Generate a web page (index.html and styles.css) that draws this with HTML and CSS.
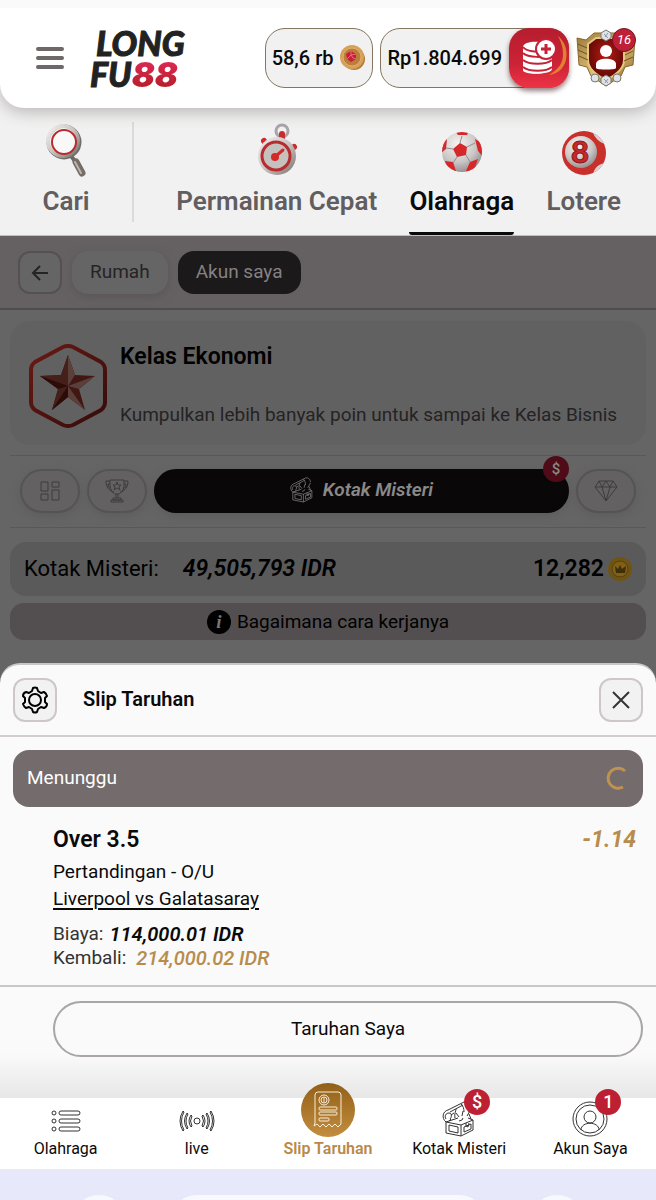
FILE: index.html
```html
<!DOCTYPE html>
<html lang="id">
<head>
    <meta charset="UTF-8">
    <meta name="viewport" content="width=device-width, initial-scale=1.0">
    <title>LONG FU88 - Slip Taruhan</title>
    <link rel="stylesheet" href="styles.css">
</head>
<body>
    <!-- Shared gradients and the treasure chest icon -->
    <svg class="defs" aria-hidden="true">
        <defs>
            <linearGradient id="silver" x1="0" y1="0" x2="1" y2="1">
                <stop offset="0" stop-color="#f4f0ef"/><stop offset="0.5" stop-color="#c9c4c2"/><stop offset="1" stop-color="#77706d"/>
            </linearGradient>
            <linearGradient id="gold" x1="0" y1="0" x2="1" y2="1">
                <stop offset="0" stop-color="#9a7838"/><stop offset="0.5" stop-color="#dbbd78"/><stop offset="1" stop-color="#8d6525"/>
            </linearGradient>
            <radialGradient id="shield" cx="0.5" cy="0.4" r="0.6">
                <stop offset="0" stop-color="#b51d12"/><stop offset="1" stop-color="#5a0504"/>
            </radialGradient>
            <linearGradient id="hex" x1="0" y1="0" x2="1" y2="1">
                <stop offset="0" stop-color="#6a1a14"/><stop offset="1" stop-color="#340c0a"/>
            </linearGradient>
            <radialGradient id="ball" cx="0.4" cy="0.3" r="0.75">
                <stop offset="0" stop-color="#f6f4f3"/><stop offset="0.6" stop-color="#cbc7c6"/><stop offset="1" stop-color="#8f8a89"/>
            </radialGradient>
            <clipPath id="ballClip"><circle cx="21" cy="21" r="20"/></clipPath>
            <clipPath id="lottoClip"><circle cx="23" cy="23" r="22"/></clipPath>
        </defs>
        <symbol id="chest" viewBox="0 0 34 36">
            <g fill="none" stroke="currentColor" stroke-width="1" stroke-linejoin="round">
                <path d="M4 21l15 3v11L4 32zM19 24l12-5v10l-12 6M4 21l12-4M26 17l5 2"/>
                <path d="M7 24l9 2v6l-9-2zM22 26l7-3v5l-7 3zM24 22v3l2 1 1-4"/>
                <path d="M4 21c-5-4-3-11 2-12L22 1c4-1 7 2 7 6"/>
                <path d="M4 18c-2-3 0-6 3-6s3 4 1 6M8 11l13-7M13 17c-1-4 1-7 1-9M22 11c0-4-1-6-3-8"/>
                <path d="M7 20l2-2M14 12l3 4M21 10l-1 5M29 8l-4 7M27 13l2 5M17 20l3-1 1-2M9 14l3-2"/>
            </g>
        </symbol>
    </svg>

    <header class="header">
        <button class="menu-button" aria-label="Menu"><span></span><span></span><span></span></button>
        <a class="logo" href="#"><span>LONG</span><span>FU<b>88</b></span></a>
        <div class="account">
            <button class="pill points">58,6 rb
                <svg width="26" height="26" viewBox="0 0 26 26">
                    <circle cx="14" cy="14" r="11" fill="#b57835"/>
                    <circle cx="12" cy="12" r="12" fill="#d5a057"/>
                    <circle cx="12" cy="12" r="9" fill="#ba7d3c" stroke="#e1b16c"/>
                    <path d="M11 6l5 3v5l-5 3-4-3-1-5z" fill="#c8203a"/><path d="M11 6v4l5-1M11 10l2 3 3 1M11 10l-4 4" stroke="#eb6b7b" stroke-width="1" fill="none"/>
                </svg>
            </button>
            <button class="pill balance">Rp1.804.699
                <span class="deposit">
                    <svg width="60" height="60" viewBox="0 0 60 60">
                        <path d="M49 8c7 6 10 14 8 24-2 8-8 14-17 15 10-6 14-12 14-21 0-7-2-12-5-18z" fill="#ec9d32" opacity="0.75"/>
                        <path d="M14 19c0-7 25-7 25 0v23c0 5-25 5-25 0z" fill="#fff"/>
                        <path d="M14 27c9 5 29 3 29 0v14c0 6-29 6-29 0z" fill="#fff"/>
                        <path d="M14 19c4 5 14 5 20 4M14 25c5 5 22 5 29 1M14 32c6 5 23 5 29 0M14 39c6 5 23 5 29 0" fill="none" stroke="#c42236" stroke-width="2"/>
                        <circle cx="37" cy="21" r="10" fill="#fff" stroke="#c42236" stroke-width="2"/>
                        <path d="M37 16v10M32 21h10" stroke="#c42236" stroke-width="3"/>
                    </svg>
                </span>
            </button>
            <button class="profile" aria-label="Profil">
                <svg width="60" height="60" viewBox="0 0 60 60">
                    <path d="M1 10l9 2 8-7h24l8 7 9-2-2 27-8 2-4 9-15 10-15-10-4-9-8-2z" fill="url(#gold)" stroke="#8c6427"/>
                    <path d="M12 16l8-6h20l8 6v16c0 9-8 15-18 20-10-5-18-11-18-20z" fill="url(#shield)" stroke="#e6c77e" stroke-width="2"/>
                    <path d="M2 16l9 4M2 22l9 4M3 28l9 4M49 20l9-4M49 27l8-4M48 33l9-4" stroke="#73511c" stroke-width="1"/>
                    <circle cx="30" cy="23" r="6" fill="#fff"/><path d="M20 40v-4c0-7 20-7 20 0v4c0 2-20 2-20 0z" fill="#fff"/>
                    <g fill="#dce2e8" stroke="#7e776a"><path d="M30 2l5 3v5l-5 3-5-3V5zM30 47l5 3v5l-5 3-5-3v-5z"/><circle cx="19" cy="50" r="4"/><circle cx="41" cy="50" r="4"/></g>
                    <path d="M28 6l4 4M32 5l-3 4M28 51l4 4M32 51l-3 4" stroke="#8997a6"/>
                </svg>
                <span class="profile-level">16</span>
            </button>
        </div>
    </header>

    <nav class="categories">
        <a class="category search" href="#">
            <svg width="44" height="56" viewBox="0 0 44 56">
                <path d="M27 34l4 5" stroke="#6e6764" stroke-width="4"/>
                <path d="M32 40l6 11" stroke="#746d68" stroke-width="7" stroke-linecap="round"/><path d="M31 40l6 11" stroke="#bcb5ae" stroke-width="2" stroke-linecap="round"/>
                <circle cx="20" cy="20" r="16" fill="#f1f1f1" stroke="#716d69" stroke-width="3"/>
                <circle cx="19" cy="19" r="15" fill="none" stroke="url(#silver)" stroke-width="4"/>
                <circle cx="20" cy="20" r="12" fill="#f8f8f8" stroke="#b82b30" stroke-width="2"/>
            </svg>
            Cari
        </a>
        <a class="category" href="#">
            <svg width="44" height="56" viewBox="0 0 44 56">
                <circle cx="27" cy="9" r="6" fill="none" stroke="#aaa3aa" stroke-width="3"/>
                <path d="M27 12v5M9 19l3 4M39 25l-3 2" stroke="#c92c2a" stroke-width="6" stroke-linecap="round"/>
                <circle cx="22" cy="34" r="19" fill="url(#silver)"/>
                <circle cx="21" cy="34" r="14" fill="#c5c1bf" stroke="#b82b2e" stroke-width="3"/>
                <path d="M21 34l7-6" stroke="#d42a28" stroke-width="3" stroke-linecap="round"/><circle cx="20" cy="35" r="4" fill="#d42a28"/>
            </svg>
            Permainan Cepat
        </a>
        <a class="category active" href="#">
            <svg width="42" height="56" viewBox="0 -9 42 56">
                <circle cx="21" cy="21" r="20" fill="url(#ball)"/>
                <g clip-path="url(#ballClip)">
                    <path d="M19 12l7 4-1 8-9 2-4-8zM14 0h14l-2 4h-9zM34 8l8 5v13l-5-6zM0 12l6-4-1 10-5 4zM4 30l8 1 3 9-8 3zM29 31l8-3-5 14-7-2z" fill="#d6282a"/>
                    <path d="M19 12l2-7M26 16l8-4M25 24l4 7M16 26l-4 6M12 18l-7-1" stroke="#928d8c" stroke-width="1"/>
                </g>
            </svg>
            Olahraga
        </a>
        <a class="category" href="#">
            <svg width="46" height="56" viewBox="0 -8 46 56">
                <circle cx="23" cy="23" r="22" fill="#c9302b"/>
                <g clip-path="url(#lottoClip)">
                    <circle cx="20" cy="22" r="16" fill="url(#ball)"/>
                    <path d="M31 0l15 14c-6 0-13-6-15-14zM46 33c-7 0-13 4-14 12l14-4z" fill="#d8d3d2"/>
                </g>
                <text x="19" y="33" class="ball-number">8</text>
            </svg>
            Lotere
        </a>
    </nav>

    <main class="content">
        <nav class="breadcrumbs">
            <button class="back" aria-label="Kembali"><svg width="18" height="18" viewBox="0 0 18 18"><path d="M9 2L2 9l7 7M2 9h15" fill="none" stroke="currentColor" stroke-width="2"/></svg></button>
            <a class="crumb" href="#">Rumah</a>
            <a class="crumb current" href="#">Akun saya</a>
        </nav>

        <section class="level-card">
            <svg width="78" height="84" viewBox="0 0 78 84">
                <path d="M34 3q5-2 10 0l28 15q4 3 4 8v32q0 5-4 8L44 81q-5 2-10 0L6 66q-4-3-4-8V26q0-5 4-8z" fill="none" stroke="url(#hex)" stroke-width="4"/>
                <path d="M39 11l7 20 20 1-16 13 6 21-17-13-16 13 6-21L11 32l21-1z" fill="#401713"/>
                <path d="M39 11v31l7-11zM66 32L39 42l11 3zM56 66L39 42v11z" fill="#5b3f3b"/>
                <path d="M39 11v31l-7-11zM11 32l28 10-7-11zM23 66l16-24-10 3z" fill="#45201b"/>
                <path d="M11 32l28 10-10 3zM39 42v11L23 66z" fill="#2d0c08"/>
            </svg>
            <div class="level-text">
                <h2>Kelas Ekonomi</h2>
                <p>Kumpulkan lebih banyak poin untuk sampai ke Kelas Bisnis</p>
            </div>
        </section>

        <div class="tabs">
            <button class="tab" aria-label="Ringkasan"><svg width="20" height="20" viewBox="0 0 20 20"><path d="M1 1h7v9H1zM1 13h7v6H1zM12 1h7v5h-7zM12 9h7v10h-7z" fill="none" stroke="currentColor"/></svg></button>
            <button class="tab" aria-label="Turnamen"><svg width="24" height="24" viewBox="0 0 24 24"><g fill="none" stroke="currentColor"><path d="M5 1h14v5c0 5-3 8-5 9h-4c-2-1-5-4-5-9zM5 2H1c0 6 3 10 8 11M19 2h4c0 6-3 10-8 11M5 5H3c0 3 1 4 3 5M19 5h2c0 3-1 4-3 5M11 15v4M13 15v4M8 19h8v2H8zM6 21h12v2H6z"/><path d="M12 3l1 3h3l-2 2 1 3-3-2-3 2 1-3-2-2h3z"/></g></svg></button>
            <button class="tab selected"><svg width="24" height="26"><use href="#chest"/></svg>Kotak Misteri<span class="badge">$</span></button>
            <button class="tab" aria-label="Berlian"><svg width="24" height="22" viewBox="0 0 24 22"><path d="M5 1h14l4 6-11 14L1 7zM1 7h22M5 1l3 6 4 14 4-14 3-6M8 7l4-6 4 6" fill="none" stroke="currentColor"/></svg></button>
        </div>

        <div class="box-total">
            <span>Kotak Misteri:</span>
            <strong class="amount">49,505,793 IDR</strong>
            <strong class="coins">12,282
                <svg width="24" height="24" viewBox="0 0 24 24"><circle cx="12" cy="12" r="12" fill="#705512"/><circle cx="12" cy="12" r="8" fill="#805f17" stroke="#554012"/><path d="M7 9l3 3 2-4 2 4 4-3-1 7H8z" fill="#3f2e0b"/></svg>
            </strong>
        </div>
        <button class="how"><span class="info">i</span>Bagaimana cara kerjanya</button>
    </main>

    <section class="slip">
        <header class="slip-header">
            <button class="square" aria-label="Pengaturan">
                <svg width="28" height="28" viewBox="0 0 28 28"><g fill="none" stroke="#000" stroke-width="2" stroke-linejoin="round"><path d="M11 5l1-3q2-1 4 0l1 3 3 2 3-1q2 1 3 4l-2 2v4l2 2q0 3-3 4l-3-1-3 2-1 3q-2 1-4 0l-1-3-3-2-3 1q-2-1-3-4l2-2v-4l-2-2q0-3 3-4l3 1z"/><circle cx="14" cy="14" r="6"/></g></svg>
            </button>
            <h2>Slip Taruhan</h2>
            <button class="square" aria-label="Tutup"><svg width="18" height="18" viewBox="0 0 18 18"><path d="M1 1l16 16M17 1L1 17" stroke="#333" stroke-width="2"/></svg></button>
        </header>
        <div class="slip-body">
            <div class="pending">Menunggu
                <svg width="24" height="24" viewBox="0 0 24 24"><path d="M20 5A10 10 0 1 0 18 21" fill="none" stroke="#c19150" stroke-width="3"/></svg>
            </div>
            <article class="bet">
                <div class="bet-title"><h3>Over 3.5</h3><span class="odds">-1.14</span></div>
                <p>Pertandingan - O/U</p>
                <p><a href="#">Liverpool vs Galatasaray</a></p>
                <dl>
                    <div><dt>Biaya:</dt><dd>114,000.01 IDR</dd></div>
                    <div class="returns"><dt>Kembali:</dt><dd>214,000.02 IDR</dd></div>
                </dl>
            </article>
        </div>
        <div class="slip-footer"><button class="my-bets">Taruhan Saya</button></div>
    </section>

    <nav class="bottom-nav">
        <a href="#"><svg width="30" height="24" viewBox="0 0 30 24"><g fill="none" stroke="#333"><circle cx="3" cy="4" r="2"/><circle cx="3" cy="12" r="2"/><circle cx="3" cy="20" r="2"/><rect x="8" y="2" width="21" height="4" rx="2"/><rect x="8" y="10" width="21" height="4" rx="2"/><rect x="8" y="18" width="21" height="4" rx="2"/></g></svg>Olahraga</a>
        <a href="#"><svg width="36" height="24" viewBox="0 0 36 24"><g fill="none" stroke="#333"><circle cx="18" cy="12" r="3"/><g id="waves"><path d="M13 7q-3 5 0 10l-1 1q-4-6 0-12zM9 5q-4 7 0 14l-1 1q-5-8 0-16zM5 3q-5 9 0 18l-1 1q-6-10 0-20z"/></g><use href="#waves" transform="matrix(-1 0 0 1 36 0)"/></g></svg>live</a>
        <a class="selected" href="#">
            <span class="slip-icon"><svg width="30" height="38" viewBox="0 0 30 38"><g fill="none" stroke="#f8eedc"><path d="M2 32V4q0-3 3-3h20q3 0 3 3v29l-3 3-3-3-3 3-3-3-3 3-3-3-3 3-3-3-3 2z"/><circle cx="11" cy="9" r="5"/><circle cx="11" cy="9" r="3"/><path d="M11 7v4"/><rect x="6" y="16" width="18" height="3" rx="1"/><rect x="6" y="21" width="18" height="3" rx="1"/><rect x="6" y="27" width="10" height="3" rx="1"/></g></svg></span>
            Slip Taruhan
        </a>
        <a href="#"><svg width="34" height="36"><use href="#chest"/></svg><span class="badge">$</span>Kotak Misteri</a>
        <a href="#"><svg width="36" height="36" viewBox="0 0 36 36"><g fill="none" stroke="#333"><circle cx="18" cy="18" r="17"/><circle cx="18" cy="18" r="14"/><circle cx="18" cy="16" r="6"/><path d="M9 29c0-9 18-9 18 0"/></g></svg><span class="badge">1</span>Akun Saya</a>
    </nav>
    <footer class="browser-bar"><span></span><span></span><span></span></footer>
</body>
</html>
```
FILE: styles.css
```css
* {
    box-sizing: border-box;
}
body {
    margin: 0;
    padding-top: 8px;
    min-height: 100vh;
    display: flex;
    flex-direction: column;
    overflow: hidden;
    background: #f1f1f1;
    color: #0b0a0b;
    font-family: Roboto, "Liberation Sans", sans-serif;
    font-size: 19px;
    line-height: 24px;
}
button {
    font: inherit;
    color: inherit;
    border: none;
    padding: 0;
    cursor: pointer;
}
a {
    color: inherit;
    text-decoration: none;
}
h2, h3, p, dl, dd {
    margin: 0;
}
svg {
    flex: none;
    display: block;
}
.defs {
    position: absolute;
    width: 0;
    height: 0;
}

/* Top header */
.header {
    position: relative;
    height: 100px;
    display: flex;
    align-items: center;
    padding: 0 20px 0 36px;
    background: #fff;
    border-radius: 0 0 24px 24px;
    box-shadow: 0 -8px 0 #fafafa, 0 4px 16px rgba(60, 50, 45, 0.3);
}
.menu-button {
    display: grid;
    gap: 5px;
    width: 28px;
    background: none;
}
.menu-button span {
    height: 4px;
    border-radius: 2px;
    background: #6e6869;
}
.logo {
    margin-left: 26px;
    display: grid;
    color: #222;
    font: italic 900 34px/31px Lato, sans-serif;
    -webkit-text-stroke: 1px #222;
}
.logo span:first-child {
    padding-left: 6px;
}
.logo b {
    background: linear-gradient(#dc2852 20%, #b81f2a 80%);
    -webkit-background-clip: text;
    background-clip: text;
    color: transparent;
    font-family: Inter, sans-serif;
    font-weight: 900;
    -webkit-text-stroke: 0;
}
.account {
    margin-left: auto;
    display: flex;
    gap: 7px;
}
.pill {
    display: flex;
    align-items: center;
    height: 60px;
    padding: 0 6px;
    gap: 7px;
    background: #f1f1f1;
    border: 1px solid #84755e;
    border-radius: 20px;
    font-size: 20px;
    font-weight: 500;
}
.balance {
    padding-right: 0;
}
.deposit {
    margin-right: -1px;
    border-radius: 20px;
    background: linear-gradient(#b51d2e, #cc2336 60%, #ee3346);
    box-shadow: 0 3px 5px rgba(50, 0, 0, 0.5);
}
.profile {
    position: relative;
    background: none;
}
.profile-level {
    position: absolute;
    top: 0;
    right: 0;
    width: 24px;
    border-radius: 50%;
    background: #bf2037;
    border: 1px solid #731623;
    color: #fff;
    font-size: 13px;
    font-style: italic;
    line-height: 22px;
}

/* Category menu */
.categories {
    height: 128px;
    display: flex;
    justify-content: space-between;
    padding: 14px 35px 0 0;
    border-bottom: 1px solid #c0bebf;
    font-size: 26px;
    font-weight: 600;
    color: #625d5e;
}
.category {
    display: flex;
    flex-direction: column;
    align-items: center;
    gap: 11px;
    line-height: 24px;
}
.search {
    width: 134px;
    height: 100px;
    margin-right: 10px;
    border-right: 2px solid #dcdbdb;
}
.active {
    color: #0b0a0b;
    background: linear-gradient(#0b0a0b, #0b0a0b) bottom / 100% 3px no-repeat;
    border-radius: 3px;
}
.ball-number {
    fill: #c7292c;
    stroke: #8c191c;
    font: 900 31px Lato, sans-serif;
    text-anchor: middle;
}

/* Page behind the slip */
.content {
    height: 451px;
    margin-bottom: -24px;
    background: #656565;
    color: #000;
}
.breadcrumbs {
    height: 74px;
    display: flex;
    align-items: flex-start;
    gap: 10px;
    padding: 15px 18px 0;
    background: #656162;
    border-bottom: 2px solid #504d4e;
    color: #252324;
}
.back {
    width: 44px;
    height: 43px;
    display: grid;
    place-items: center;
    background: #656565;
    border: 2px solid #555152;
    border-radius: 12px;
}
.crumb {
    padding: 0 18px 2px;
    line-height: 41px;
    background: #656565;
    border-radius: 16px;
    box-shadow: 0 3px 10px #5a5657;
}
.current {
    color: #858182;
    background: #1b191a;
    box-shadow: none;
}
.level-card {
    display: flex;
    align-items: center;
    gap: 13px;
    height: 124px;
    margin: 11px 10px 10px;
    padding: 6px 19px 0;
    border-radius: 20px;
    background: #616161;
}
.level-text {
    display: grid;
    gap: 34px;
    color: #252324;
}
.level-text h2 {
    color: #000;
    font-size: 23px;
    font-weight: 600;
}
.tabs {
    height: 73px;
    display: flex;
    align-items: center;
    gap: 7px;
    margin: 0 10px;
    padding: 0 10px 2px;
    border: 1px solid #585858;
    border-width: 1px 0;
}
.tab {
    position: relative;
    width: 60px;
    height: 44px;
    display: flex;
    align-items: center;
    justify-content: center;
    gap: 9px;
    background: #646162;
    border: 2px solid #565354;
    border-radius: 22px;
    color: #3c3c3c;
    box-shadow: 0 3px 8px #5d5d5d;
}
.tab.selected {
    flex: 1;
    padding-bottom: 2px;
    background: #090708;
    border-color: #090708;
    color: #898989;
    font-style: italic;
    font-weight: 600;
}
.badge {
    position: absolute;
    width: 26px;
    border-radius: 50%;
    background: #bd2032;
    color: #fff;
    font-size: 18px;
    font-style: normal;
    font-weight: 500;
    line-height: 26px;
    text-align: center;
}
.tab .badge {
    top: -15px;
    right: -2px;
    background: #4f0c18;
    color: #898989;
    font-size: 15px;
}
.box-total {
    display: flex;
    align-items: center;
    height: 54px;
    margin: 14px 10px 7px;
    padding: 0 14px;
    background: #5a5a5a;
    border-radius: 16px;
    font-size: 22px;
}
.box-total strong {
    font-size: 23px;
    font-weight: 600;
}
.amount {
    margin-left: 24px;
    font-style: italic;
}
.coins {
    margin-left: auto;
    display: flex;
    align-items: center;
    gap: 4px;
}
.how {
    display: flex;
    align-items: center;
    justify-content: center;
    gap: 6px;
    width: calc(100% - 20px);
    height: 37px;
    margin: 0 10px;
    border-radius: 14px;
    background: #534f50;
}
.info {
    width: 24px;
    border-radius: 50%;
    background: #000;
    color: #777;
    font: italic bold 19px/24px "Liberation Serif", serif;
}

/* Bet slip */
.slip {
    position: relative;
    height: 435px;
    background: #fafafa;
    border-top: 2px solid #c8c6c6;
    border-radius: 20px 20px 0 0;
}
.slip-header {
    display: flex;
    align-items: center;
    height: 72px;
    padding: 0 13px;
    border-bottom: 2px solid #d2cecf;
}
.slip-header h2 {
    flex: 1;
    margin-left: 26px;
    padding-bottom: 3px;
    font-size: 20px;
    font-weight: 600;
}
.square {
    width: 44px;
    height: 44px;
    display: grid;
    place-items: center;
    background: #f2f2f2;
    border: 2px solid #cdc7c8;
    border-radius: 12px;
}
.slip-body {
    height: 250px;
    padding: 13px;
    border-bottom: 2px solid #cbc7c8;
}
.pending {
    display: flex;
    align-items: center;
    justify-content: space-between;
    height: 57px;
    padding: 0 14px 2px;
    border-radius: 16px;
    background: #746c6c;
    color: #fff;
}
.bet {
    padding: 21px 7px 0 40px;
}
.bet-title {
    display: flex;
    justify-content: space-between;
    margin-bottom: 8px;
    font-size: 23px;
}
.bet h3 {
    font-size: 23px;
    font-weight: 600;
}
.bet p {
    height: 27px;
}
.bet a {
    text-decoration: underline;
    text-decoration-thickness: 2px;
    text-underline-offset: 3px;
}
.odds {
    color: #b88c4c;
    font-style: italic;
    font-weight: 700;
}
.bet dl {
    margin-top: 8px;
}
.bet dl div {
    display: flex;
    gap: 6px;
}
.bet .returns {
    gap: 10px;
}
.bet dt {
    color: #333;
}
.bet dd {
    font-size: 20px;
    font-style: italic;
    font-weight: 600;
}
.bet .returns dd {
    color: #b88c4c;
    font-weight: 500;
}
.slip-footer {
    height: 111px;
    padding: 14px 13px 0 53px;
    background: linear-gradient(#fafafa 60%, #e7e7e7);
}
.my-bets {
    width: 100%;
    height: 56px;
    background: #fafafa;
    border: 2px solid #aaa5a6;
    border-radius: 28px;
}

/* Bottom navigation */
.bottom-nav {
    position: relative;
    height: 71px;
    display: grid;
    grid-template: 100% / repeat(5, 1fr);
    padding-bottom: 8px;
    background: #fff;
    font-size: 16px;
}
.bottom-nav a {
    position: relative;
    display: flex;
    flex-direction: column;
    align-items: center;
    justify-content: flex-end;
    line-height: 24px;
}
.bottom-nav a > svg {
    color: #333;
}
.bottom-nav a:nth-child(-n+2) > svg {
    margin-bottom: 4px;
}
.bottom-nav .selected {
    color: #b9894b;
    font-weight: 600;
}
.slip-icon {
    flex: none;
    display: grid;
    place-items: center;
    width: 54px;
    height: 54px;
    border-radius: 50%;
    background: linear-gradient(#916018, #c38d3e);
}
.bottom-nav .badge {
    top: -9px;
    left: calc(50% + 5px);
}
.browser-bar {
    height: 31px;
    display: grid;
    grid-template-columns: 54px 1fr 54px;
    gap: 44px;
    padding: 26px 72px 0;
    background: #e8e8fb;
    overflow: hidden;
}
.browser-bar span {
    height: 54px;
    border-radius: 27px;
    background: #f8f8ff;
}
```
